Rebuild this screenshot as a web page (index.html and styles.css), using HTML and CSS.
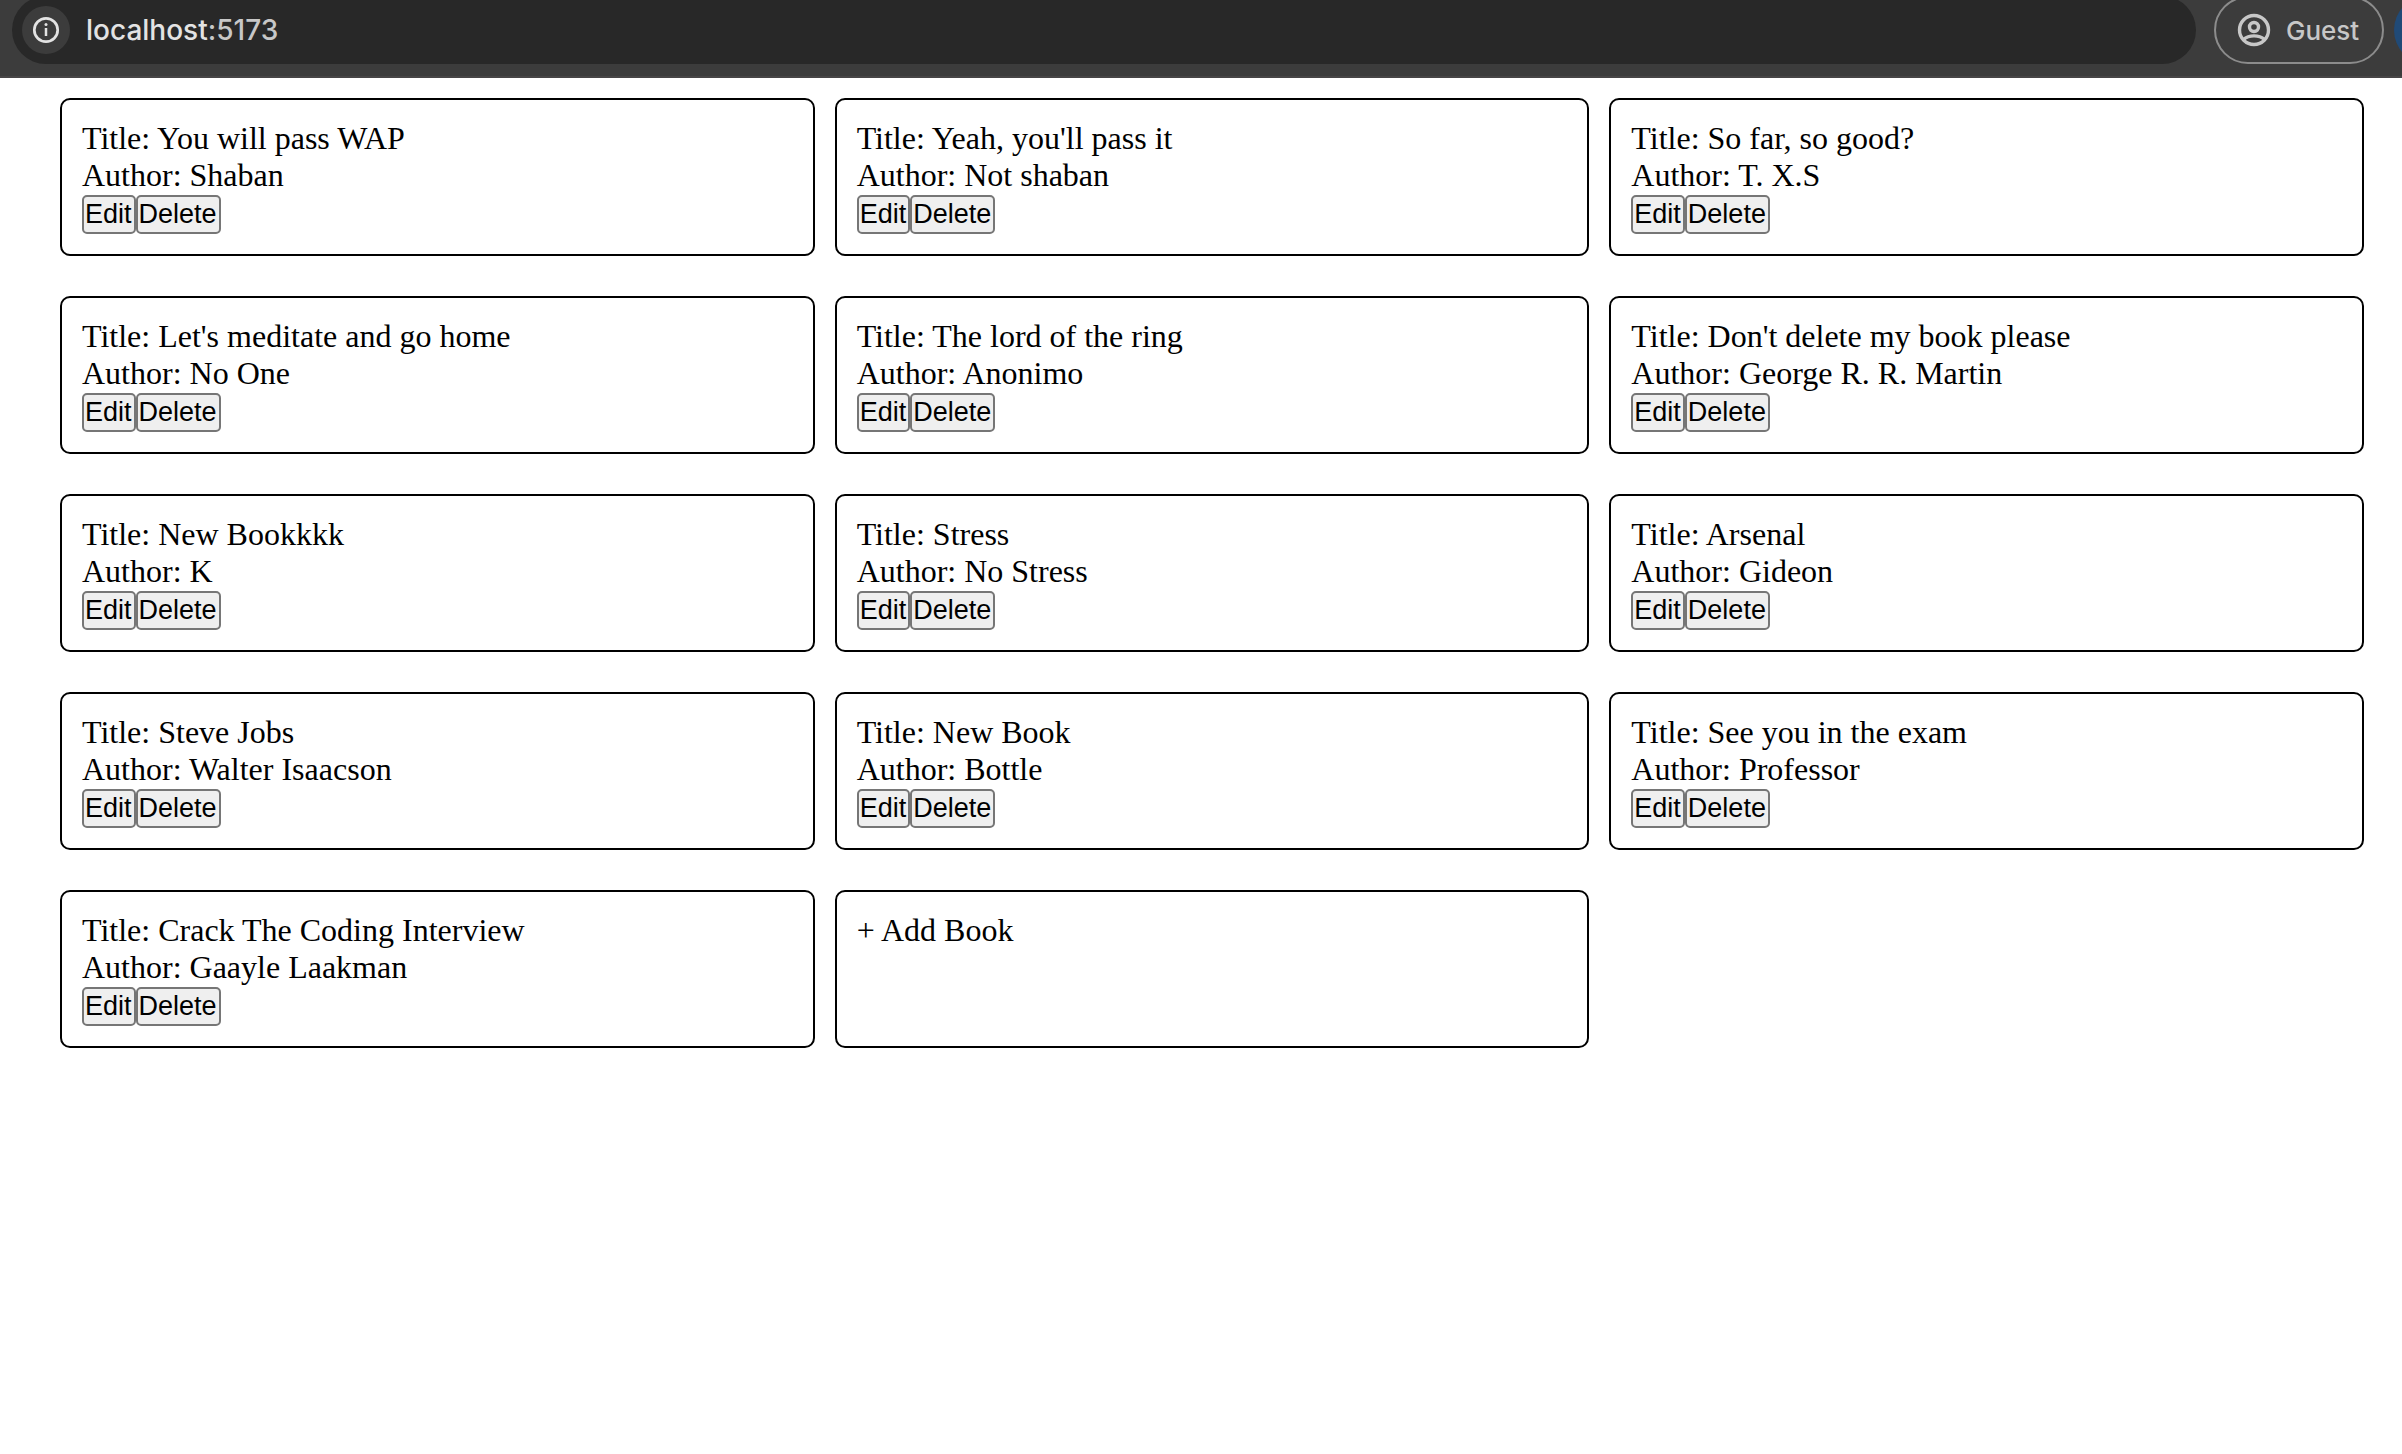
FILE: index.html
```html
<!DOCTYPE html>
<html lang="en">
<head>
<meta charset="utf-8">
<meta name="viewport" content="width=device-width, initial-scale=1">
<title>Books</title>
<link rel="stylesheet" href="styles.css">
</head>
<body>
<header class="toolbar">
  <div class="address-bar">
    <button class="site-info" type="button" aria-label="View site information">
      <svg width="28" height="28" viewBox="0 0 28 28" fill="none" aria-hidden="true">
        <circle cx="14" cy="14" r="11.7" stroke="currentColor" stroke-width="2.7"/>
        <path d="M14 12v8" stroke="currentColor" stroke-width="2.5"/>
        <circle cx="14" cy="8.500" r="1.5" fill="currentColor"/>
      </svg>
    </button>
    <a class="url" href="#">localhost<span class="port">:5173</span></a>
  </div>
  <button class="profile" type="button">
    <svg width="34" height="34" viewBox="0 0 34 34" fill="none" stroke="currentColor" stroke-width="3.4" aria-hidden="true">
      <circle cx="17" cy="17" r="14.5"/>
      <circle cx="17" cy="14" r="4.5"/>
      <path d="M6.500 26.500C12 21.600 22 21.600 27.500 26.500"/>
    </svg>
    Guest
  </button>
  <button class="update" type="button" aria-label="Update"></button>
</header>
<main class="books">
  <article class="card">
    <p>Title: You will pass WAP</p>
    <p>Author: Shaban</p>
    <div class="actions"><button type="button">Edit</button><button type="button">Delete</button></div>
  </article>
  <article class="card">
    <p>Title: Yeah, you'll pass it</p>
    <p>Author: Not shaban</p>
    <div class="actions"><button type="button">Edit</button><button type="button">Delete</button></div>
  </article>
  <article class="card">
    <p>Title: So far, so good?</p>
    <p>Author: T. X.S</p>
    <div class="actions"><button type="button">Edit</button><button type="button">Delete</button></div>
  </article>
  <article class="card">
    <p>Title: Let's meditate and go home</p>
    <p>Author: No One</p>
    <div class="actions"><button type="button">Edit</button><button type="button">Delete</button></div>
  </article>
  <article class="card">
    <p>Title: The lord of the ring</p>
    <p>Author: Anonimo</p>
    <div class="actions"><button type="button">Edit</button><button type="button">Delete</button></div>
  </article>
  <article class="card">
    <p>Title: Don't delete my book please</p>
    <p>Author: George R. R. Martin</p>
    <div class="actions"><button type="button">Edit</button><button type="button">Delete</button></div>
  </article>
  <article class="card">
    <p>Title: New Bookkkk</p>
    <p>Author: K</p>
    <div class="actions"><button type="button">Edit</button><button type="button">Delete</button></div>
  </article>
  <article class="card">
    <p>Title: Stress</p>
    <p>Author: No Stress</p>
    <div class="actions"><button type="button">Edit</button><button type="button">Delete</button></div>
  </article>
  <article class="card">
    <p>Title: Arsenal</p>
    <p>Author: Gideon</p>
    <div class="actions"><button type="button">Edit</button><button type="button">Delete</button></div>
  </article>
  <article class="card">
    <p>Title: Steve Jobs</p>
    <p>Author: Walter Isaacson</p>
    <div class="actions"><button type="button">Edit</button><button type="button">Delete</button></div>
  </article>
  <article class="card">
    <p>Title: New Book</p>
    <p>Author: Bottle</p>
    <div class="actions"><button type="button">Edit</button><button type="button">Delete</button></div>
  </article>
  <article class="card">
    <p>Title: See you in the exam</p>
    <p>Author: Professor</p>
    <div class="actions"><button type="button">Edit</button><button type="button">Delete</button></div>
  </article>
  <article class="card">
    <p>Title: Crack The Coding Interview</p>
    <p>Author: Gaayle Laakman</p>
    <div class="actions"><button type="button">Edit</button><button type="button">Delete</button></div>
  </article>
  <button class="card add-book" type="button">+ Add Book</button>
</main>
</body>
</html>
```
FILE: styles.css
```css
* {
  box-sizing: border-box;
}

body {
  margin: 0;
  background: #fff;
  color: #000;
  font-family: "Liberation Serif", "Times New Roman", serif;
  font-size: 32px;
  line-height: 37px;
}

.toolbar {
  display: flex;
  align-items: center;
  height: 78px;
  padding: 0 0 16px 12px;
  border-bottom: 2px solid #474546;
  background: #3c3c3c;
  font-family: Inter, "Liberation Sans", sans-serif;
  overflow: hidden;
}

.address-bar {
  display: flex;
  flex: 1;
  align-items: center;
  gap: 16px;
  height: 68px;
  padding-left: 10px;
  border-radius: 34px;
  background: #282828;
}

.site-info {
  display: flex;
  align-items: center;
  justify-content: center;
  width: 48px;
  height: 48px;
  padding: 0;
  border: 0;
  border-radius: 50%;
  background: #3c3c3c;
  color: #e3e3e3;
}

.url {
  color: #e3e3e3;
  font-size: 28px;
  font-weight: 500;
  text-decoration: none;
}

.port {
  color: #c7c7c7;
}

.profile {
  display: flex;
  flex: none;
  align-items: center;
  gap: 15px;
  width: 170px;
  height: 68px;
  margin-left: 18px;
  padding: 0 0 0 21px;
  border: 2px solid #8c8c8c;
  border-radius: 34px;
  background: transparent;
  color: #c7c7c7;
  font: 500 26px/37px Inter, "Liberation Sans", sans-serif;
}

.update {
  flex: none;
  width: 68px;
  height: 68px;
  margin: 0 -60px 0 10px;
  padding: 0;
  border: 0;
  border-radius: 50%;
  background: #204a77;
}

.books {
  display: grid;
  grid-template-columns: repeat(3, 1fr);
  gap: 40px 20px;
  padding: 20px 38px 20px 60px;
}

.card {
  padding: 20px;
  border: 2px solid #000;
  border-radius: 10px;
}

.card p {
  margin: 0;
}

.actions {
  display: flex;
  padding-top: 1px;
}

.actions button {
  height: 39px;
  padding: 0 2px 0 1px;
  border: 2px solid #767676;
  border-radius: 5px;
  background: #efefef;
  color: #000;
  font: 27px/31px "Liberation Sans", Arial, sans-serif;
}

.add-book {
  display: flex;
  align-items: flex-start;
  background: transparent;
  color: inherit;
  font: inherit;
  text-align: left;
}
```
